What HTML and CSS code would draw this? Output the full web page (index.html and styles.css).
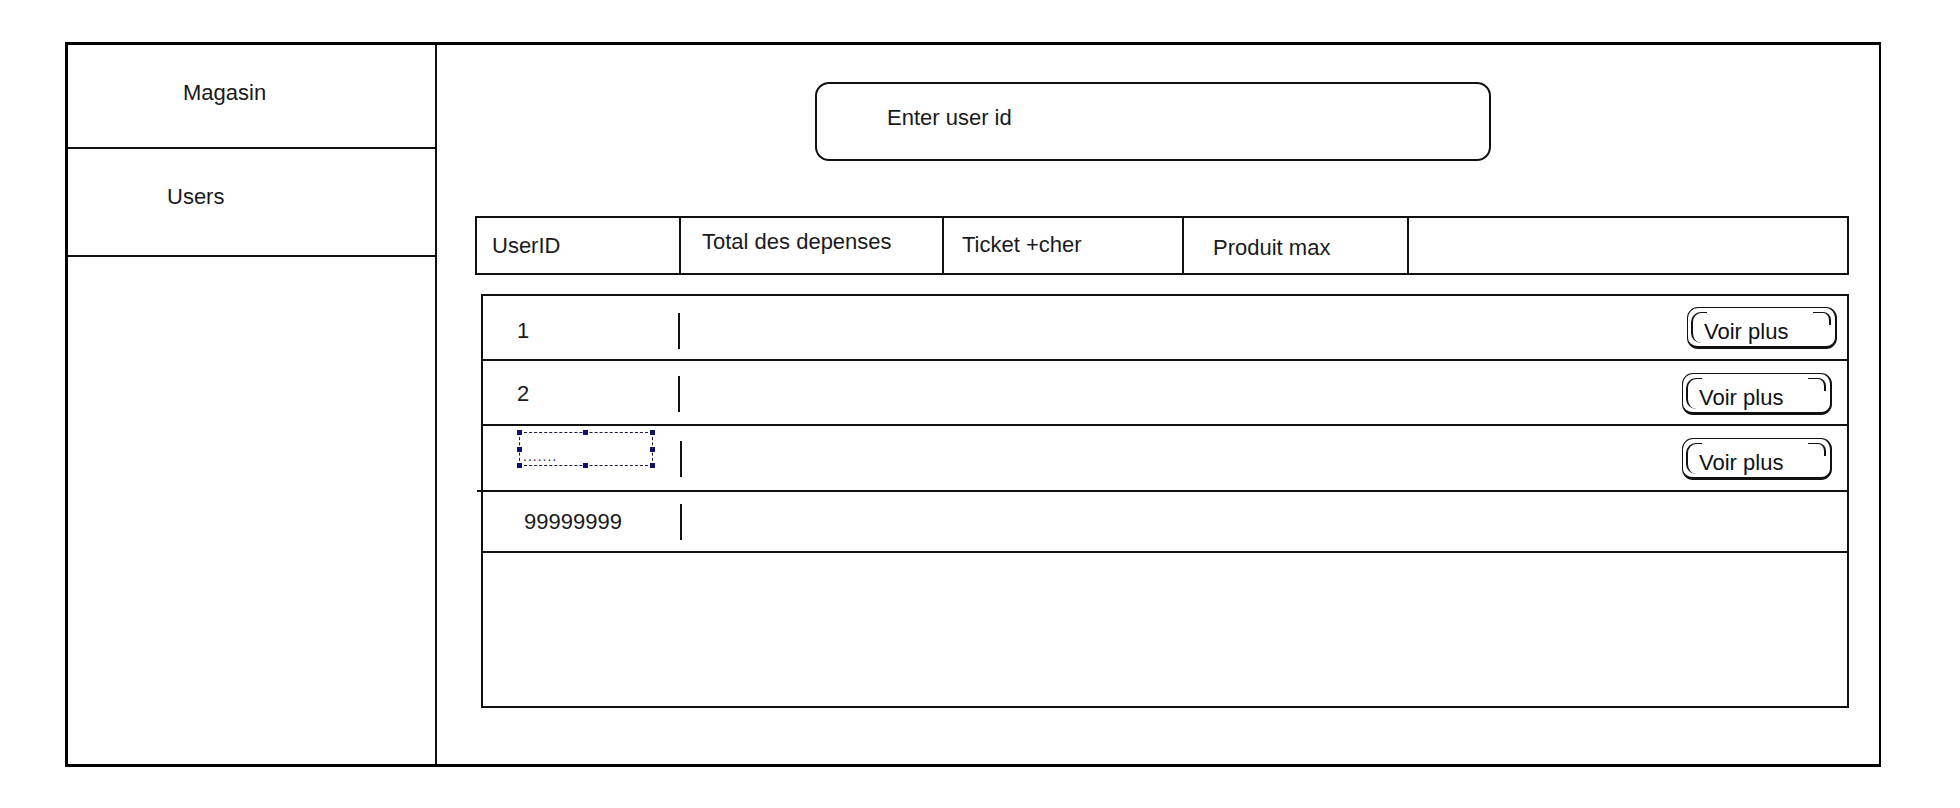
FILE: index.html
```html
<!DOCTYPE html>
<html lang="fr">
<head>
    <meta charset="UTF-8">
    <meta name="viewport" content="width=device-width, initial-scale=1.0">
    <title>Magasin - Users</title>
    <link rel="stylesheet" href="styles.css">
</head>
<body>
    <div class="frame">
        <aside class="sidebar">
            <div class="nav-item nav-magasin">Magasin</div>
            <div class="nav-item nav-users">Users</div>
        </aside>

        <main class="main">
            <div class="search">Enter user id</div>

            <div class="thead">
                <div class="th th-id">UserID</div>
                <div class="th th-total">Total des depenses</div>
                <div class="th th-ticket">Ticket +cher</div>
                <div class="th th-produit">Produit max</div>
                <div class="th"></div>
            </div>

            <div class="tbody">
                <div class="row row-1">
                    <div class="cell-id">1</div>
                    <div class="tick"></div>
                    <button class="voir">Voir plus</button>
                </div>
                <div class="row row-2">
                    <div class="cell-id">2</div>
                    <div class="tick"></div>
                    <button class="voir">Voir plus</button>
                </div>
                <div class="row row-3">
                    <div class="cell-id">
                        <div class="selection">
                            <span class="dots">.......</span>
                            <i class="handle h-tl"></i><i class="handle h-tm"></i><i class="handle h-tr"></i>
                            <i class="handle h-ml"></i><i class="handle h-mr"></i>
                            <i class="handle h-bl"></i><i class="handle h-bm"></i><i class="handle h-br"></i>
                        </div>
                    </div>
                    <div class="tick"></div>
                    <button class="voir">Voir plus</button>
                </div>
                <div class="row row-4">
                    <div class="cell-id">99999999</div>
                    <div class="tick"></div>
                </div>
            </div>
        </main>
    </div>
</body>
</html>
```

FILE: styles.css
```css
body {
    margin: 0;
    padding: 0;
    background: #fff;
    color: #1a1a1a;
    font-family: "Liberation Sans", Arial, sans-serif;
    font-size: 22px;
    line-height: 26px;
}

.frame {
    box-sizing: border-box;
    display: flex;
    width: 1816px;
    height: 725px;
    margin: 42px 0 0 65px;
    border: 3px solid #000;
    border-right-width: 2px;
}

/* left menu */
.sidebar {
    width: 369px;
    flex-shrink: 0;
    box-sizing: border-box;
    border-right: 2px solid #111;
}

.nav-item {
    box-sizing: border-box;
    padding-top: 35px;
    border-bottom: 2px solid #111;
}

.nav-magasin {
    height: 104px;
    padding-left: 115px;
}

.nav-users {
    height: 108px;
    padding-left: 99px;
}

/* main area */
.main {
    flex: 1;
}

.search {
    box-sizing: border-box;
    width: 676px;
    height: 79px;
    margin: 37px 0 0 378px;
    padding: 21px 0 0 70px;
    border: 2px solid #111;
    border-radius: 14px;
}

.thead {
    box-sizing: border-box;
    display: grid;
    grid-template-columns: 204px 263px 240px 225px 1fr;
    width: 1374px;
    height: 59px;
    margin: 55px 0 0 38px;
    border: 2px solid #111;
}

.th {
    border-right: 2px solid #111;
    white-space: nowrap;
}

.th:last-child {
    border-right: none;
}

.th-id {
    padding: 15px 0 0 15px;
}

.th-total {
    padding: 11px 0 0 21px;
}

.th-ticket {
    padding: 14px 0 0 18px;
}

.th-produit {
    padding: 17px 0 0 29px;
}

.tbody {
    box-sizing: border-box;
    width: 1368px;
    height: 414px;
    margin: 19px 0 0 44px;
    border: 2px solid #111;
}

.row {
    position: relative;
    box-sizing: border-box;
    display: flex;
    align-items: center;
    border-bottom: 2px solid #111;
}

.row-1 { height: 65px; padding-top: 6px; }
.row-2 { height: 65px; padding-top: 2px; }
.row-3 { height: 66px; padding-top: 2px; }
.row-4 { height: 61px; }

/* the third line runs a bit past the box on the left */
.row-3::after {
    content: "";
    position: absolute;
    left: -6px;
    bottom: -2px;
    width: 6px;
    height: 2px;
    background: #111;
}

.cell-id {
    box-sizing: border-box;
    width: 195px;
    padding-left: 34px;
}

.row-4 .cell-id {
    width: 197px;
    padding-left: 41px;
}

.row-3 .cell-id {
    padding-left: 36px;
    align-self: flex-start;
    padding-top: 4px;
}

.tick {
    width: 2px;
    height: 36px;
    background: #111;
}

.row-3 .tick {
    margin-left: 2px;
}

.voir {
    position: relative;
    box-sizing: border-box;
    width: 150px;
    height: 42px;
    margin-left: auto;
    margin-right: 15px;
    padding: 10px 0 0 16px;
    text-align: left;
    background: #fff;
    color: #111;
    font-family: inherit;
    font-size: 22px;
    line-height: 26px;
    border: 1px solid #111;
    border-right-width: 2px;
    border-bottom-width: 3px;
    border-radius: 11px;
}

.voir::before {
    content: "";
    position: absolute;
    left: 3px;
    top: 4px;
    bottom: 3px;
    width: 14px;
    border-left: 2px solid #111;
    border-top: 1px solid #111;
    border-radius: 10px 0 0 10px;
}

.voir::after {
    content: "";
    position: absolute;
    right: 4px;
    top: 4px;
    width: 16px;
    height: 12px;
    border-top: 1px solid #111;
    border-right: 2px solid #111;
    border-radius: 0 8px 0 0;
}

.row-1 .voir {
    margin-right: 10px;
    margin-top: -6px;
}

/* selected text box in row 3 */
.selection {
    position: relative;
    box-sizing: border-box;
    width: 134px;
    height: 34px;
    border: 1px dashed #1a1a40;
}

.dots {
    position: absolute;
    left: 3px;
    top: 10px;
    font-size: 14px;
    letter-spacing: 1px;
    color: #333;
}

.handle {
    position: absolute;
    width: 5px;
    height: 5px;
    background: #101070;
}

.h-tl { left: -3px; top: -3px; }
.h-tm { left: 63px; top: -3px; }
.h-tr { right: -3px; top: -3px; }
.h-ml { left: -3px; top: 14px; }
.h-mr { right: -3px; top: 14px; }
.h-bl { left: -3px; bottom: -3px; }
.h-bm { left: 63px; bottom: -3px; }
.h-br { right: -3px; bottom: -3px; }
```
